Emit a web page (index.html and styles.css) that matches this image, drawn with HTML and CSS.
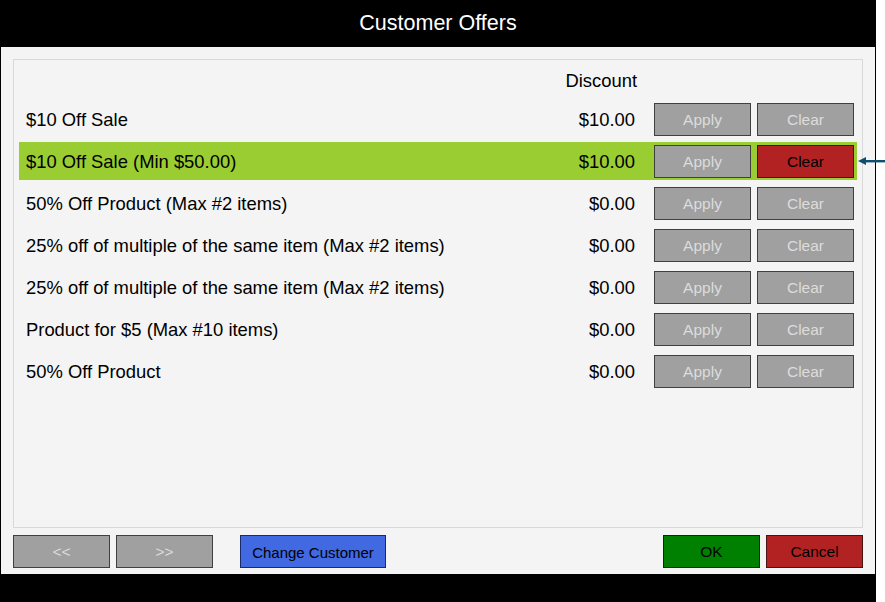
FILE: index.html
```
<!DOCTYPE html>
<html>
<head>
<meta charset="utf-8">
<link rel="stylesheet" href="styles.css">
</head>
<body>
<div class="app">
  <div class="title">Customer Offers</div>
  <div class="content">
    <div class="panel">
      <div class="head-row"><span class="amount">Discount</span></div>
      <div class="row"><span class="label">$10 Off Sale</span><span class="amount">$10.00</span><button class="btn gray">Apply</button><button class="btn gray">Clear</button></div>
      <div class="row selected"><span class="label">$10 Off Sale (Min $50.00)</span><span class="amount">$10.00</span><button class="btn gray">Apply</button><button class="btn red">Clear</button></div>
      <div class="row"><span class="label">50% Off Product (Max #2 items)</span><span class="amount">$0.00</span><button class="btn gray">Apply</button><button class="btn gray">Clear</button></div>
      <div class="row"><span class="label">25% off of multiple of the same item (Max #2 items)</span><span class="amount">$0.00</span><button class="btn gray">Apply</button><button class="btn gray">Clear</button></div>
      <div class="row"><span class="label">25% off of multiple of the same item (Max #2 items)</span><span class="amount">$0.00</span><button class="btn gray">Apply</button><button class="btn gray">Clear</button></div>
      <div class="row"><span class="label">Product for $5 (Max #10 items)</span><span class="amount">$0.00</span><button class="btn gray">Apply</button><button class="btn gray">Clear</button></div>
      <div class="row"><span class="label">50% Off Product</span><span class="amount">$0.00</span><button class="btn gray">Apply</button><button class="btn gray">Clear</button></div>
    </div>
    <div class="footer">
      <button class="btn gray">&lt;&lt;</button>
      <button class="btn gray">&gt;&gt;</button>
      <button class="btn blue wide">Change Customer</button>
      <span class="spacer"></span>
      <button class="btn green">OK</button>
      <button class="btn red">Cancel</button>
    </div>
  </div>
  <svg class="pointer" width="28" height="8" viewBox="0 0 28 8"><polygon points="0,4 8,0 8,8" fill="#0f4f6e"/><rect x="6" y="3" width="22" height="2.4" fill="#0f4f6e"/></svg>
</div>
</body>
</html>
```
FILE: styles.css
```
html, body {
  margin: 0;
  padding: 0;
  background: #ffffff;
  font-family: "Liberation Sans", Arial, sans-serif;
}
.app {
  position: relative;
  width: 874px;
  height: 602px;
  background: #000;
  padding: 0 1px;
  display: flex;
  flex-direction: column;
}
.title {
  height: 47px;
  line-height: 46px;
  text-align: center;
  color: #fff;
  font-size: 21.5px;
}
.content {
  background: #f4f4f4;
  height: 527px;
  padding: 12px 12px 0 12px;
  box-sizing: border-box;
  display: flex;
  flex-direction: column;
}
.panel {
  box-sizing: border-box;
  height: 469px;
  border: 1px solid #d9d9d9;
  padding: 0 5px;
  display: flex;
  flex-direction: column;
}
.head-row {
  height: 40px;
  display: flex;
  align-items: center;
  font-size: 18.4px;
  color: #000;
}
.head-row .amount {
  width: 618px;
  text-align: right;
  margin-top: 2px;
}
.row {
  height: 38px;
  margin-bottom: 4px;
  display: flex;
  align-items: center;
  padding: 0 3px 0 7px;
  font-size: 18.4px;
  color: #000;
}
.row.selected {
  background: #9acd32;
}
.label {
  flex: 1;
  margin-top: 2px;
}
.row .amount {
  text-align: right;
  margin-right: 18px;
  padding-right: 1px;
  margin-top: 2px;
}
.btn {
  box-sizing: border-box;
  width: 97px;
  height: 33px;
  padding: 1px 0 0 0;
  font-family: "Liberation Sans", Arial, sans-serif;
  font-size: 15.5px;
  border: 1px solid #404040;
  border-radius: 0;
  color: #000;
}
.row .btn + .btn {
  margin-left: 6px;
}
.btn.gray {
  background: #a0a0a0;
  color: #dcdcdc;
}
.btn.red {
  background: #b22222;
  border-color: #4a1212;
}
.btn.green {
  background: #008000;
  border-color: #0d2a0d;
}
.btn.blue {
  background: #4169e1;
  border-color: #1a2a6a;
  font-size: 15px;
}
.btn.wide {
  width: 146px;
}
.footer {
  margin-top: 7px;
  display: flex;
  align-items: center;
  gap: 6px;
}
.footer .btn.wide {
  margin-left: 21px;
}
.spacer {
  flex: 1;
}
.pointer {
  position: absolute;
  left: 858px;
  top: 157px;
}
```
